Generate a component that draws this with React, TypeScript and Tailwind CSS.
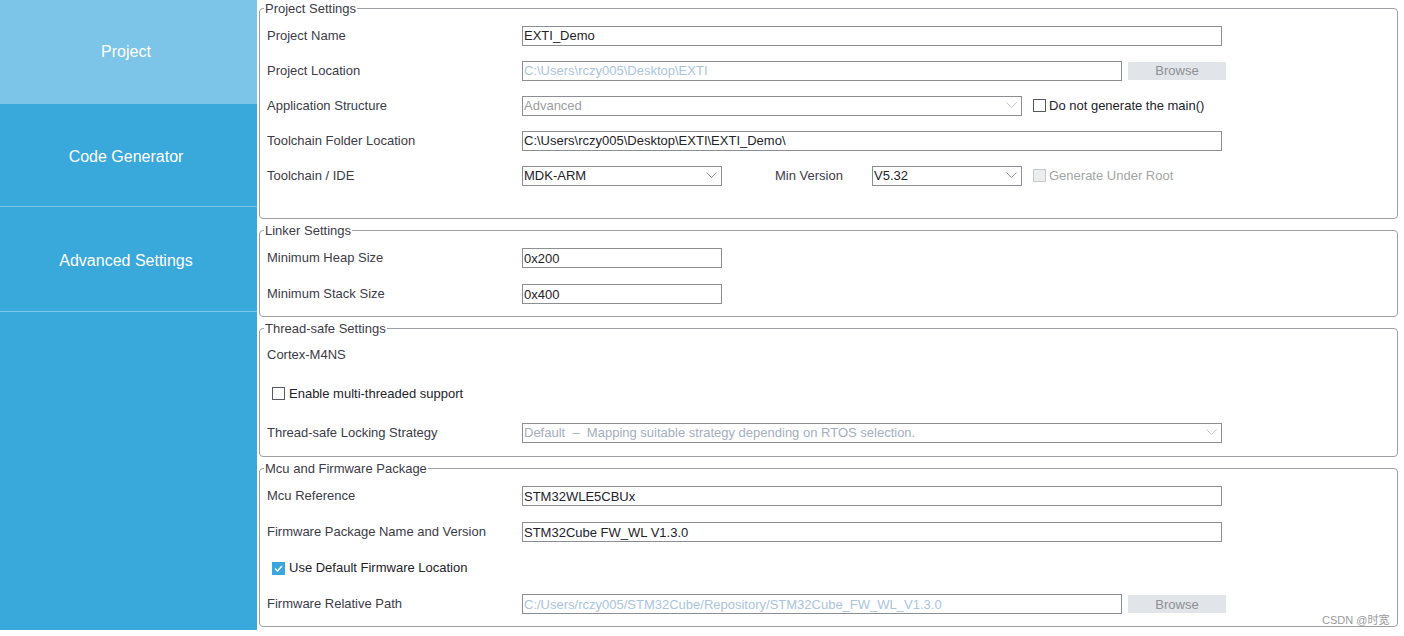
import type { ReactNode } from 'react';

const FONT = { fontFamily: '"Liberation Sans", Arial, "Noto Sans CJK SC", sans-serif' };

function Chevron({ light }: { light?: boolean }) {
  return (
    <svg width="11" height="7" viewBox="0 0 11 7" className="shrink-0">
      <polyline
        points="0.5,0.5 5.5,5.5 10.5,0.5"
        fill="none"
        stroke={light ? '#c4c8cc' : '#8e9296'}
        strokeWidth="1"
      />
    </svg>
  );
}

function Box({ checked, disabled }: { checked?: boolean; disabled?: boolean }) {
  if (checked) {
    return (
      <span className="inline-flex items-center justify-center w-[13px] h-[13px] bg-[#3ba5dc] shrink-0">
        <svg width="11" height="11" viewBox="0 0 11 11">
          <polyline points="2,5.5 4.5,8 9,3" fill="none" stroke="#fff" strokeWidth="1.4" />
        </svg>
      </span>
    );
  }
  return (
    <span
      className={
        disabled
          ? 'inline-block w-[13px] h-[13px] border border-[#c6c9cc] bg-[#ebedef] shrink-0'
          : 'inline-block w-[13px] h-[13px] border border-[#555a60] bg-white shrink-0'
      }
    />
  );
}

function Input({ value, w, disabled }: { value: string; w: string; disabled?: boolean }) {
  return (
    <div
      className={`${w} h-[20px] border border-[#8b8f94] bg-white flex items-center pl-[1px] text-[13px] leading-none whitespace-nowrap overflow-hidden ${
        disabled ? 'text-[#aac4dd]' : 'text-[#23232b]'
      }`}
    >
      {value}
    </div>
  );
}

function Select({
  value,
  w,
  disabled,
  muted,
}: {
  value: ReactNode;
  w: string;
  disabled?: boolean;
  muted?: boolean;
}) {
  return (
    <div
      className={`${w} h-[20px] border border-[#8b8f94] bg-white flex items-center justify-between pl-[1px] pr-[4px] text-[13px] leading-none whitespace-pre ${
        disabled ? 'text-[#9b9ea3]' : muted ? 'text-[#a4aec0]' : 'text-[#23232b]'
      }`}
    >
      <span>{value}</span>
      <Chevron light={disabled || muted} />
    </div>
  );
}

function Browse() {
  return (
    <div className="ml-[6px] w-[98px] h-[18px] bg-[#e1e4e8] flex items-center justify-center text-[13px] text-[#8d9094] leading-none">
      Browse
    </div>
  );
}

function Row({ label, h, children }: { label?: string; h: string; children?: ReactNode }) {
  return (
    <div className={`${h} flex items-center`}>
      <div className="w-[255px] shrink-0 text-[13px] text-[#3c3c48] whitespace-nowrap">{label}</div>
      {children}
    </div>
  );
}

function Group({ title, h, pt, children }: { title: string; h: string; pt: string; children: ReactNode }) {
  return (
    <fieldset className={`${h} border border-[#9ca0a5] rounded-[4px]`}>
      <legend className="ml-[4px] px-[1px] text-[13px] leading-[16px] text-[#3c3c48]">
        <span className="relative top-[1px]">{title}</span>
      </legend>
      <div className={`${pt} pl-[7px]`}>{children}</div>
    </fieldset>
  );
}

export default function App() {
  return (
    <div className="relative w-[1404px] h-[636px] bg-white flex overflow-hidden" style={FONT}>
      <aside className="w-[257px] h-[630px] bg-[#39a8db] flex flex-col shrink-0 text-[16px] text-white">
        <div className="h-[104px] bg-[#7cc4e8] flex items-center justify-center pr-[5px]">Project</div>
        <div className="h-[103px] border-b border-[#7ec5ea] flex items-center justify-center pr-[5px] pt-[3px]">
          Code Generator
        </div>
        <div className="h-[105px] border-b border-[#7ec5ea] flex items-center justify-center pr-[5px] pt-[3px]">
          Advanced Settings
        </div>
      </aside>

      <main className="ml-[2px] w-[1139px] flex flex-col gap-[3px]">
        <Group title="Project Settings" h="h-[219px]" pt="pt-[2px]">
          <Row label="Project Name" h="h-[35px]">
            <Input value="EXTI_Demo" w="w-[700px]" />
          </Row>
          <Row label="Project Location" h="h-[35px]">
            <Input value="C:\Users\rczy005\Desktop\EXTI" w="w-[600px]" disabled />
            <Browse />
          </Row>
          <Row label="Application Structure" h="h-[35px]">
            <Select value="Advanced" w="w-[500px]" disabled />
            <label className="ml-[11px] flex items-center gap-[3px] text-[13px] text-[#23232b]">
              <Box />
              Do not generate the main()
            </label>
          </Row>
          <Row label="Toolchain Folder Location" h="h-[35px]">
            <Input value="C:\Users\rczy005\Desktop\EXTI\EXTI_Demo\" w="w-[700px]" />
          </Row>
          <Row label="Toolchain / IDE" h="h-[35px]">
            <Select value="MDK-ARM" w="w-[200px]" />
            <div className="w-[150px] pl-[53px] text-[13px] text-[#3c3c48]">Min Version</div>
            <Select value="V5.32" w="w-[150px]" />
            <label className="ml-[11px] flex items-center gap-[3px] text-[13px] text-[#a3a5a8]">
              <Box disabled />
              Generate Under Root
            </label>
          </Row>
        </Group>

        <Group title="Linker Settings" h="h-[95px]" pt="pt-[2px]">
          <Row label="Minimum Heap Size" h="h-[36px]">
            <Input value="0x200" w="w-[200px]" />
          </Row>
          <Row label="Minimum Stack Size" h="h-[36px]">
            <Input value="0x400" w="w-[200px]" />
          </Row>
        </Group>

        <Group title="Thread-safe Settings" h="h-[137px]" pt="pt-0">
          <Row label="Cortex-M4NS" h="h-[38px]" />
          <div className="h-[39px] flex items-center pl-[5px] gap-[4px] text-[13px] text-[#23232b]">
            <Box />
            Enable multi-threaded support
          </div>
          <Row label="Thread-safe Locking Strategy" h="h-[39px]">
            <Select
              value={'Default  \u2013  Mapping suitable strategy depending on RTOS selection.'}
              w="w-[700px]"
              muted
            />
          </Row>
        </Group>

        <Group title="Mcu and Firmware Package" h="h-[167px]" pt="pt-[2px]">
          <Row label="Mcu Reference" h="h-[36px]">
            <Input value="STM32WLE5CBUx" w="w-[700px]" />
          </Row>
          <Row label="Firmware Package Name and Version" h="h-[36px]">
            <Input value="STM32Cube FW_WL V1.3.0" w="w-[700px]" />
          </Row>
          <div className="h-[36px] flex items-center pl-[5px] gap-[4px] text-[13px] text-[#23232b]">
            <Box checked />
            Use Default Firmware Location
          </div>
          <Row label="Firmware Relative Path" h="h-[36px]">
            <Input
              value="C:/Users/rczy005/STM32Cube/Repository/STM32Cube_FW_WL_V1.3.0"
              w="w-[600px]"
              disabled
            />
            <Browse />
          </Row>
        </Group>
      </main>

      <div className="absolute left-[1322px] top-[613px] text-[11px] text-[#9a9a9a] leading-[14px] whitespace-nowrap">
        CSDN @时宽
      </div>
    </div>
  );
}
